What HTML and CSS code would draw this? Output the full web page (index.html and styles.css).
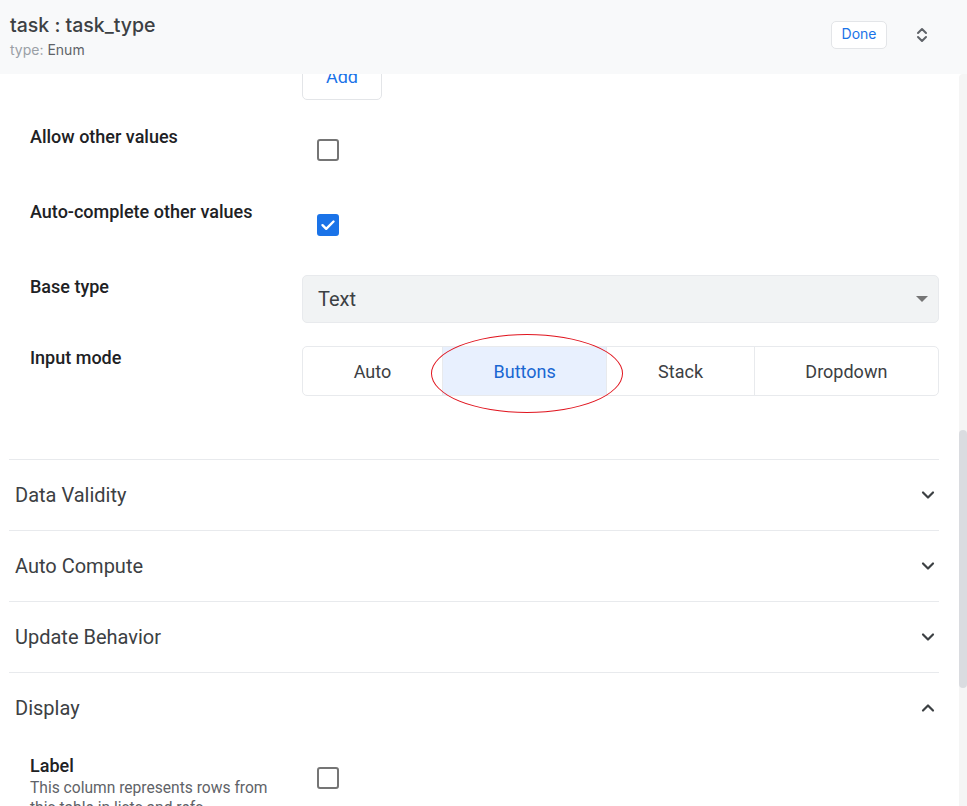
FILE: index.html
```html
<!DOCTYPE html>
<html lang="en">
<head>
<meta charset="utf-8">
<title>task : task_type</title>
<link rel="stylesheet" href="styles.css">
</head>
<body>
<div class="app">
  <header class="topbar">
    <div class="topbar-titles">
      <div class="topbar-title">task : task_type</div>
      <div class="topbar-sub"><span class="muted">type:</span> Enum</div>
    </div>
    <div class="topbar-actions">
      <button class="done-btn">Done</button>
      <svg class="updown" width="12" height="18" viewBox="0 0 12 18" aria-hidden="true">
        <path d="M2 7 L6 3 L10 7" fill="none" stroke="#5f6368" stroke-width="2" stroke-linecap="round" stroke-linejoin="round"/>
        <path d="M2 11 L6 15 L10 11" fill="none" stroke="#5f6368" stroke-width="2" stroke-linecap="round" stroke-linejoin="round"/>
      </svg>
    </div>
  </header>

  <div class="body">
    <main class="content">
      <div class="field field-add">
        <div class="field-label"></div>
        <div class="field-control"><button class="add-btn">Add</button></div>
      </div>

      <div class="field">
        <div class="field-label">Allow other values</div>
        <div class="field-control check-wrap"><span class="checkbox"></span></div>
      </div>

      <div class="field">
        <div class="field-label">Auto-complete other values</div>
        <div class="field-control check-wrap">
          <span class="checkbox checked">
            <svg width="18" height="18" viewBox="0 0 18 18" aria-hidden="true"><path d="M3.5 9.2 L7.2 12.8 L14.5 5.5" fill="none" stroke="#fff" stroke-width="2.4" stroke-linecap="round" stroke-linejoin="round"/></svg>
          </span>
        </div>
      </div>

      <div class="field">
        <div class="field-label">Base type</div>
        <div class="field-control">
          <div class="select"><span>Text</span><span class="caret"></span></div>
        </div>
      </div>

      <div class="field field-mode">
        <div class="field-label">Input mode</div>
        <div class="field-control">
          <div class="segmented">
            <div class="seg">Auto</div>
            <div class="seg selected">Buttons</div>
            <div class="seg">Stack</div>
            <div class="seg">Dropdown</div>
            <div class="annotation"></div>
          </div>
        </div>
      </div>

      <section class="section first">
        <div class="section-head"><span>Data Validity</span><svg class="chev" width="14" height="10" viewBox="0 0 14 10"><path d="M2 2.5 L7 7.5 L12 2.5" fill="none" stroke="#3c4043" stroke-width="2.2" stroke-linecap="round" stroke-linejoin="round"/></svg></div>
      </section>
      <section class="section">
        <div class="section-head"><span>Auto Compute</span><svg class="chev" width="14" height="10" viewBox="0 0 14 10"><path d="M2 2.5 L7 7.5 L12 2.5" fill="none" stroke="#3c4043" stroke-width="2.2" stroke-linecap="round" stroke-linejoin="round"/></svg></div>
      </section>
      <section class="section">
        <div class="section-head"><span>Update Behavior</span><svg class="chev" width="14" height="10" viewBox="0 0 14 10"><path d="M2 2.5 L7 7.5 L12 2.5" fill="none" stroke="#3c4043" stroke-width="2.2" stroke-linecap="round" stroke-linejoin="round"/></svg></div>
      </section>
      <section class="section open">
        <div class="section-head"><span>Display</span><svg class="chev" width="14" height="10" viewBox="0 0 14 10"><path d="M2 7.5 L7 2.5 L12 7.5" fill="none" stroke="#3c4043" stroke-width="2.2" stroke-linecap="round" stroke-linejoin="round"/></svg></div>
        <div class="section-body">
          <div class="field">
            <div class="field-label">
              Label
              <div class="field-desc">This column represents rows from this table in lists and refs</div>
            </div>
            <div class="field-control check-wrap"><span class="checkbox"></span></div>
          </div>
        </div>
      </section>
    </main>
    <div class="scrollbar">
      <div class="scroll-space"></div>
      <div class="scroll-thumb"></div>
    </div>
  </div>
</div>
</body>
</html>
```

FILE: styles.css
```css
* { box-sizing: border-box; }
html, body { margin: 0; padding: 0; }
body {
  font-family: Roboto, "Noto Sans", Arial, sans-serif;
  color: #202124;
  background: #fff;
}
.app {
  height: 806px;
  display: flex;
  flex-direction: column;
  overflow: hidden;
}
.topbar {
  height: 74px;
  flex: none;
  background: #f8f9fa;
  display: flex;
  align-items: flex-start;
  justify-content: space-between;
  padding: 12px 39px 0 10px;
  position: relative;
  z-index: 2;
}
.topbar-title {
  font-family: Inter, Roboto, sans-serif;
  font-size: 19.5px;
  font-weight: 500;
  color: #3c4043;
  line-height: 26px;
}
.topbar-sub {
  font-family: Inter, Roboto, sans-serif;
  font-size: 14px;
  color: #5f6368;
  line-height: 20px;
  margin-top: 2px;
}
.muted { color: #9aa0a6; }
.topbar-actions {
  display: flex;
  align-items: center;
  gap: 29px;
  margin-top: 9px;
}
.done-btn {
  font-family: Inter, Roboto, sans-serif;
  font-size: 14px;
  line-height: 16px;
  color: #1a73e8;
  background: #fff;
  border: 1px solid #e3e5e8;
  border-radius: 5px;
  height: 28px;
  width: 56px;
  padding: 0 0 3px;
}
.updown { display: block; }

.body {
  flex: 1;
  display: flex;
  min-height: 0;
}
.content {
  flex: 1;
  overflow: hidden;
  padding: 0 20px 0 9px;
}
.scrollbar {
  width: 8px;
  flex: none;
  background: #f5f5f5;
  border-radius: 4px 0 0 0;
  display: flex;
  flex-direction: column;
}
.scroll-space { height: 356px; }
.scroll-thumb {
  height: 258px;
  background: #dadce0;
  border-radius: 4px;
}

.field {
  display: flex;
  align-items: flex-start;
  margin-top: 27px;
}
.field-add { margin-top: -19px; }
.field-add + .field { margin-top: 25px; }
.field-mode { margin-top: 23px; }
.field-label {
  width: 293px;
  flex: none;
  padding: 0 20px 0 21px;
  font-size: 18px;
  font-weight: 500;
  line-height: 24px;
  color: #202124;
}
.field-desc {
  font-size: 15.6px;
  font-weight: 400;
  color: #5f6368;
  line-height: 20px;
}
.field-control { flex: 1; min-width: 0; }
.check-wrap {
  height: 48px;
  display: flex;
  align-items: center;
  padding-left: 15px;
}
.checkbox {
  width: 22px;
  height: 22px;
  border: 2px solid #757575;
  border-radius: 3px;
  display: flex;
  align-items: center;
  justify-content: center;
  margin-top: 2px;
}
.checkbox.checked {
  background: #1a73e8;
  border-color: #1a73e8;
}
.checkbox svg { display: block; flex: none; }

.add-btn {
  width: 80px;
  height: 45px;
  background: #fff;
  border: 1px solid #e3e5e8;
  border-radius: 5px;
  font-family: Roboto, sans-serif;
  font-size: 18px;
  color: #1a73e8;
  padding: 0 0 2px;
}

.select {
  height: 48px;
  background: #f1f3f4;
  border: 1px solid #e8eaed;
  border-radius: 5px;
  display: flex;
  align-items: center;
  justify-content: space-between;
  padding: 0 10px 0 15px;
  font-size: 20px;
  color: #3c4043;
}
.caret {
  width: 0;
  height: 0;
  border-left: 6px solid transparent;
  border-right: 6px solid transparent;
  border-top: 6px solid #757575;
}

.segmented {
  position: relative;
  display: flex;
  height: 50px;
  border: 1px solid #e8eaed;
  border-radius: 5px;
}
.seg {
  flex: 1 1 auto;
  display: flex;
  align-items: center;
  justify-content: center;
  font-size: 18px;
  color: #3c4043;
  border-left: 1px solid #e8eaed;
}
.seg:first-child { border-left: none; }
.seg.selected {
  background: #e8f0fe;
  color: #1967d2;
}
.annotation {
  position: absolute;
  left: 128px;
  top: -13px;
  width: 192px;
  height: 79px;
  border: 1.6px solid #e0141e;
  border-radius: 50%;
  pointer-events: none;
}

.section {
  border-top: 1px solid #e8eaed;
}
.section.first { margin-top: 63px; }
.section-head {
  height: 70px;
  display: flex;
  align-items: center;
  justify-content: space-between;
  padding: 0 4px 0 6px;
  font-size: 20px;
  color: #3c4043;
}
.chev { display: block; }
.section-body { padding-top: 11px; }
.section-body .field { margin-top: 0; }
.section-body .check-wrap { height: 28px; margin-top: 9px; }
```
